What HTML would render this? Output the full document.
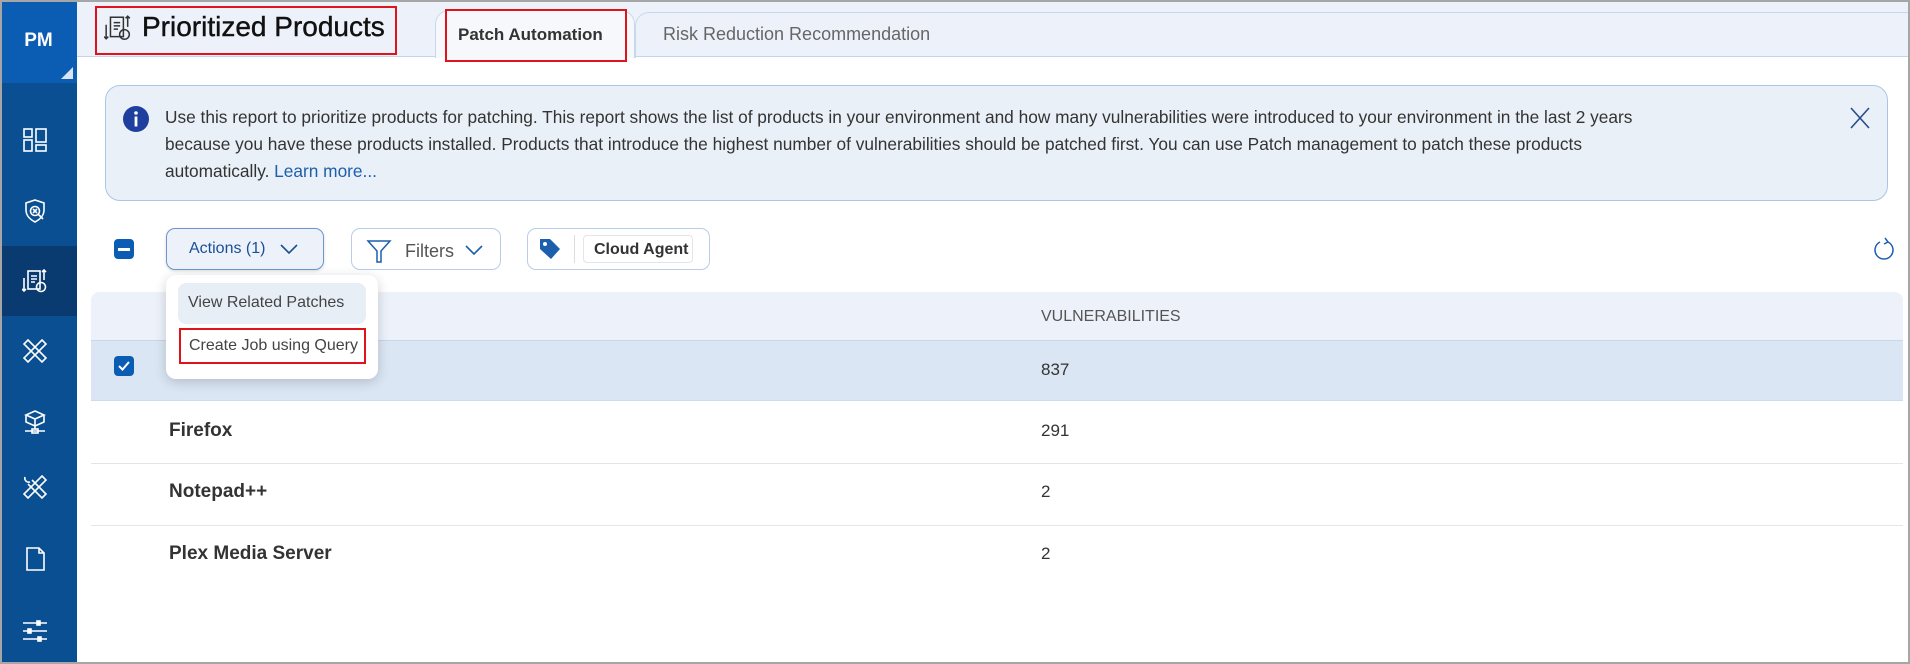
<!DOCTYPE html>
<html><head><meta charset="utf-8"><style>
*{box-sizing:border-box;margin:0;padding:0}
body{width:1910px;height:664px;overflow:hidden;background:#fff;font-family:"Liberation Sans",sans-serif;position:relative;color:#222}
.frame{position:absolute;inset:0;border:2px solid #a6a6a6;z-index:50;pointer-events:none}
.side{position:absolute;left:0;top:0;width:77px;height:664px;background:#0a4f91}
.pm{position:absolute;left:0;top:0;width:77px;height:83px;background:#0b5cb3;color:#fff;font-weight:bold;font-size:19px;text-align:center;line-height:82px}
.tri{position:absolute;right:4px;bottom:4px;width:0;height:0;border-left:12px solid transparent;border-bottom:12px solid #d8e4f2}
.act{position:absolute;left:0;top:246px;width:77px;height:70px;background:#0a3b70}
.ic{position:absolute;left:22px;width:26px;height:26px}
.hdr{position:absolute;left:77px;top:0;right:0;height:57px;background:#edf2fa;border-bottom:1px solid #c3d5ec}
.abs{position:absolute}
.red{border:2px solid #e0121b}
.info{position:absolute;left:105px;top:85px;width:1783px;height:116px;background:#eaf0f8;border:1px solid #a9c6e8;border-radius:15px}
.info p{position:absolute;left:59px;top:18px;width:1680px;font-size:17.3px;line-height:27px;color:#333;white-space:nowrap}
.btn{position:absolute;top:228px;height:42px;border:1px solid #b7cde8;border-radius:9px;background:#fff;font-size:16px;color:#555}
.row{position:absolute;left:91px;width:1812px;border-bottom:1px solid #e2e6ea}
.name{position:absolute;left:78px;font-weight:bold;font-size:19px;color:#333}
.num{position:absolute;left:950px;font-size:17px;color:#333}
.cb{position:absolute;left:114px;width:20px;height:20px;background:#0b5cb3;border-radius:4px}
</style></head><body>
<div class="side">
 <div class="pm">PM<div class="tri"></div></div>
 <div class="act"></div>
 <svg class="ic" style="top:127px" viewBox="0 0 26 26" fill="none" stroke="#fff" stroke-width="1.6"><rect x="2" y="2" width="8" height="8"/><rect x="2" y="13" width="8" height="11"/><rect x="14" y="2" width="10" height="13"/><rect x="14" y="18" width="10" height="6"/></svg>
 <svg class="ic" style="top:198px" viewBox="0 0 26 26" fill="none" stroke="#fff" stroke-width="1.6"><path d="M13 2 L22 5 V12 C22 18 17 22 13 24 C9 22 4 18 4 12 V5 Z"/><circle cx="13" cy="13" r="4.5"/><path d="M11 11l4 4M15 11l-4 4M16 16l5 5"/></svg>
 <svg class="ic" style="top:268px" viewBox="0 0 26 26" fill="none" stroke="#fff" stroke-width="1.6"><path d="M2 10v13M0 21l2 2 2-2"/><rect x="6" y="3" width="12" height="18"/><path d="M9 8h6M9 11h6M9 14h4M22 2v10M20 4l2-2 2 2"/><circle cx="19" cy="19" r="4.5"/></svg>
 <svg class="ic" style="top:338px" viewBox="0 0 26 26" fill="none" stroke="#fff" stroke-width="1.6"><path d="M6 2 L24 20 L20 24 L2 6 Z M20 2 L24 6 L6 24 L2 20 Z"/></svg>
 <svg class="ic" style="top:409px" viewBox="0 0 26 26" fill="none" stroke="#fff" stroke-width="1.6"><path d="M13 2 L22 6 L13 10 L4 6 Z M4 6v7l9 4 9-4V6M13 10v7M13 17v3M3 22h20"/><rect x="10" y="20" width="6" height="4"/></svg>
 <svg class="ic" style="top:474px" viewBox="0 0 26 26" fill="none" stroke="#fff" stroke-width="1.6"><path d="M10 6 L24 20 L20 24 L6 10 M20 2 L24 6 L6 24 L2 20 Z M3 3 a4 4 0 0 0 5 5"/></svg>
 <svg class="ic" style="top:546px" viewBox="0 0 26 26" fill="none" stroke="#fff" stroke-width="1.6"><path d="M5 2h12l5 5v17H5Z M17 2v5h5"/></svg>
 <svg class="ic" style="top:618px" viewBox="0 0 26 26" fill="none" stroke="#fff" stroke-width="1.6"><path d="M1 5h24M1 13h24M1 21h24"/><rect x="15" y="3" width="3" height="4" fill="#fff"/><rect x="6" y="11" width="3" height="4" fill="#fff"/><rect x="16" y="19" width="3" height="4" fill="#fff"/></svg>
</div>
<div class="hdr"></div>
<div class="abs red" style="left:95px;top:6px;width:302px;height:49px;"></div>
<svg class="abs" style="left:104px;top:14px" width="28" height="28" viewBox="0 0 26 26" fill="none" stroke="#333" stroke-width="1.4"><path d="M2 10v13M0 21l2 2 2-2"/><rect x="6" y="3" width="12" height="18"/><path d="M9 8h6M9 11h6M9 14h4M22 2v10M20 4l2-2 2 2"/><circle cx="19" cy="19" r="4.5"/></svg>
<div class="abs" style="left:142px;top:11px;font-size:28px;color:#111;-webkit-text-stroke:0.4px #111">Prioritized Products</div>
<div class="abs" style="left:435px;top:10px;width:200px;height:48px;background:#f6f8fb;border:1px solid #c8d8ec;border-bottom:none;border-radius:14px 14px 0 0"></div>
<div class="abs red" style="left:445px;top:9px;width:182px;height:53px;background:#f6f8fb"></div>
<div class="abs" style="left:458px;top:25px;font-size:17px;font-weight:bold;color:#333">Patch Automation</div>
<div class="abs" style="left:635px;top:12px;width:1275px;height:46px;border:1px solid #c8d8ec;border-bottom:none;border-radius:14px 0 0 0"></div>
<div class="abs" style="left:663px;top:24px;font-size:18px;color:#666">Risk Reduction Recommendation</div>

<div class="info">
 <svg class="abs" style="left:16px;top:19px" width="28" height="28" viewBox="0 0 28 28"><circle cx="14" cy="14" r="13" fill="#1e3f9e"/><circle cx="14" cy="8" r="1.8" fill="#fff"/><rect x="12.6" y="11.5" width="2.8" height="10" fill="#fff"/></svg>
 <p>Use this report to prioritize products for patching. This report shows the list of products in your environment and how many vulnerabilities were introduced to your environment in the last 2 years<br>because you have these products installed. Products that introduce the highest number of vulnerabilities should be patched first. You can use Patch management to patch these products<br>automatically. <span style="color:#1b5fad">Learn more...</span></p>
 <svg class="abs" style="left:1743px;top:20px" width="22" height="24" viewBox="0 0 22 24" stroke="#2a4d87" stroke-width="1.6"><path d="M2 2L20 22M20 2L2 22"/></svg>
</div>

<div class="cb" style="top:239px"><div style="position:absolute;left:4px;top:9px;width:12px;height:2.5px;background:#fff"></div></div>
<div class="btn" style="left:166px;width:158px;border-color:#6b97cc;background:#edf2fa;color:#1b4f96;box-shadow:0 1px 3px rgba(0,0,0,.15)"><span class="abs" style="left:22px;top:11px">Actions (1)</span><svg class="abs" style="left:112px;top:14px" width="20" height="12" viewBox="0 0 20 12" fill="none" stroke="#1b4f96" stroke-width="1.6"><path d="M2 2l8 8 8-8"/></svg></div>
<div class="btn" style="left:351px;width:150px"><svg class="abs" style="left:14px;top:9px" width="26" height="26" viewBox="0 0 26 26" fill="none" stroke="#1b5fad" stroke-width="1.5"><path d="M2 3h22l-9 10v11h-4V13Z"/></svg><span class="abs" style="left:53px;top:12px;font-size:18px">Filters</span><svg class="abs" style="left:112px;top:15px" width="20" height="12" viewBox="0 0 20 12" fill="none" stroke="#1b5fad" stroke-width="1.6"><path d="M2 2l8 8 8-8"/></svg></div>
<div class="btn" style="left:527px;width:183px"><svg class="abs" style="left:10px;top:8px" width="24" height="24" viewBox="0 0 24 24"><path d="M2 2h10l10 10-9 10L2 12Z" fill="#1b5fad"/><circle cx="7" cy="7" r="2" fill="#fff"/></svg><div class="abs" style="left:46px;top:6px;width:1px;height:28px;background:#ddd"></div><div class="abs" style="left:55px;top:6px;width:110px;height:28px;border:1px solid #e2e5ea;border-radius:4px;font-weight:bold;font-size:16px;color:#333;padding:5px 0 0 10px">Cloud Agent</div></div>
<svg class="abs" style="left:1871px;top:236px" width="26" height="28" viewBox="0 0 26 28" fill="none" stroke="#1b5fad" stroke-width="1.5"><path d="M17 6 A9 9 0 1 1 9 6"/><path d="M14 2l3 4-4 2"/></svg>

<div class="abs" style="left:91px;top:292px;width:1812px;height:49px;background:#edf2fa;border-radius:8px 8px 0 0;border-bottom:1px solid #c7d7ea"></div>
<div class="abs" style="left:1041px;top:308px;font-size:16px;color:#555">VULNERABILITIES</div>
<div class="row" style="top:341px;height:60px;background:#dae6f3;border-bottom:1px solid #cfdbe9"><div class="num" style="top:19px">837</div></div>
<div class="cb" style="top:356px"><svg style="position:absolute;left:3px;top:3px" width="14" height="14" viewBox="0 0 14 14" fill="none" stroke="#fff" stroke-width="2"><path d="M2 7l3.5 3.5L12 3"/></svg></div>
<div class="row" style="top:401px;height:63px"><div class="name" style="top:19px">Firefox</div><div class="num" style="top:20px">291</div></div>
<div class="row" style="top:464px;height:62px"><div class="name" style="top:17px">Notepad++</div><div class="num" style="top:18px">2</div></div>
<div class="row" style="top:526px;height:62px;border:none"><div class="name" style="top:17px">Plex Media Server</div><div class="num" style="top:18px">2</div></div>

<div class="abs" style="left:166px;top:275px;width:212px;height:104px;background:#fff;border-radius:10px;box-shadow:0 3px 12px rgba(0,0,0,.18)">
 <div class="abs" style="left:12px;top:8px;width:188px;height:41px;background:#e8eef6;border-radius:8px;font-size:16px;color:#444;padding:11px 0 0 10px">View Related Patches</div>
 <div class="abs red" style="left:13px;top:53px;width:187px;height:36px;font-size:16px;color:#444;padding:7px 0 0 8px">Create Job using Query</div>
</div>
<div class="frame"></div>
</body></html>
